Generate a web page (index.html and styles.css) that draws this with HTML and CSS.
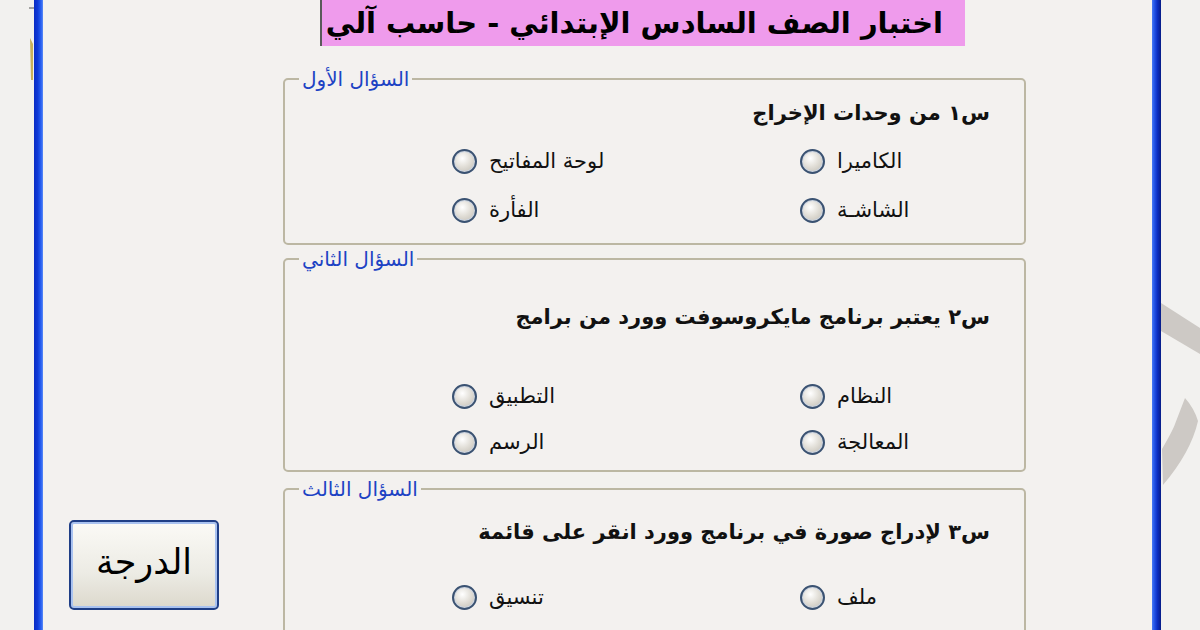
FILE: index.html
```html
<!DOCTYPE html>
<html lang="ar">
<head>
    <meta charset="UTF-8">
    <title>اختبار الصف السادس الإبتدائي</title>
    <link rel="stylesheet" href="styles.css">
</head>
<body>
    <div class="outside-left">
        <svg width="34" height="630" viewBox="0 0 34 630">
            <line x1="29" y1="8" x2="34" y2="8" stroke="#555" stroke-width="1"/>
            <path d="M30 38 L33 44 L33 80 L31 80 Z" fill="#c9b15a"/>
        </svg>
    </div>

    <div class="window">
        <div class="edge-left"></div>
        <div class="content">
            <div class="side">
                <button class="grade-button">الدرجة</button>
            </div>

            <div class="main">
                <div class="title">اختبار الصف السادس الإبتدائي - حاسب آلي</div>

                <fieldset class="group group-1">
                    <legend>السؤال الأول</legend>
                    <div class="question">س١ من وحدات الإخراج</div>
                    <div class="options">
                        <label class="option"><span class="radio"></span>لوحة المفاتيح</label>
                        <label class="option"><span class="radio"></span>الكاميرا</label>
                        <label class="option"><span class="radio"></span>الفأرة</label>
                        <label class="option"><span class="radio"></span>الشاشـة</label>
                    </div>
                </fieldset>

                <fieldset class="group group-2">
                    <legend>السؤال الثاني</legend>
                    <div class="question">س٢ يعتبر برنامج مايكروسوفت وورد من برامج</div>
                    <div class="options">
                        <label class="option"><span class="radio"></span>التطبيق</label>
                        <label class="option"><span class="radio"></span>النظام</label>
                        <label class="option"><span class="radio"></span>الرسم</label>
                        <label class="option"><span class="radio"></span>المعالجة</label>
                    </div>
                </fieldset>

                <fieldset class="group group-3">
                    <legend>السؤال الثالث</legend>
                    <div class="question">س٣ لإدراج صورة في برنامج وورد انقر على قائمة</div>
                    <div class="options">
                        <label class="option"><span class="radio"></span>تنسيق</label>
                        <label class="option"><span class="radio"></span>ملف</label>
                    </div>
                </fieldset>
            </div>
        </div>
        <div class="edge-right"></div>
    </div>

    <div class="outside-right">
        <!-- faded logo behind the window -->
        <svg width="39" height="630" viewBox="0 0 39 630">
            <path d="M0 303 L39 328 L39 354 L0 331 Z" fill="#cdc9c5"/>
            <path d="M24 398 Q33 408 37 421 Q30 452 2 485 L1 449 Q12 430 14 424 Z" fill="#cdc9c5"/>
        </svg>
    </div>
</body>
</html>
```

FILE: styles.css
```css
body {
    margin: 0;
    width: 1200px;
    height: 630px;
    overflow: hidden;
    display: flex;
    background-color: #f2f1ef;
    font-family: "DejaVu Sans", sans-serif;
}
.outside-left {
    width: 34px;
    flex-shrink: 0;
}
.outside-right {
    width: 39px;
    flex-shrink: 0;
}
.outside-left svg,
.outside-right svg {
    display: block;
}
.window {
    width: 1127px;
    display: flex;
    flex-shrink: 0;
}
.edge-left {
    width: 9px;
    background: linear-gradient(to right, #0a2cc4, #0f3ad8 40%, #2a62f2 80%, #5d8cf6);
}
.edge-right {
    width: 9px;
    background: linear-gradient(to right, #4a7cf4, #2456e8 25%, #0b2ec2 60%, #071c86);
}
.content {
    flex: 1;
    display: flex;
    background-color: #f3f1ef;
}

/* left column with the grade button */
.side {
    width: 240px;
    flex-shrink: 0;
    box-sizing: border-box;
    display: flex;
    align-items: flex-end;
    padding: 0 0 20px 26px;
}
.grade-button {
    width: 150px;
    height: 90px;
    border: 2px solid #1f3e86;
    border-radius: 5px;
    background: linear-gradient(to bottom, #fbfaf6, #ecebe4 60%, #dcd8cc);
    box-shadow: inset 0 0 0 2px #a9c2f0;
    font-family: "DejaVu Sans", sans-serif;
    font-size: 35px;
    color: #000;
    padding: 0 0 6px;
    cursor: pointer;
}

/* main column */
.main {
    width: 743px;
    flex-shrink: 0;
    display: flex;
    flex-direction: column;
}
.title {
    margin-left: 37px;
    width: 645px;
    height: 46px;
    box-sizing: border-box;
    background-color: #ef9bec;
    border-left: 2px solid #5a5a5a;
    direction: rtl;
    white-space: nowrap;
    padding-right: 22px;
    font-size: 29px;
    font-weight: bold;
    line-height: 46px;
    color: #000;
}

/* question group boxes */
.group {
    margin: 0;
    padding: 0;
    border: 2px solid #bcb7a3;
    border-radius: 5px;
    min-width: 0;
}
.group legend {
    margin-left: 14px;
    padding: 0 3px;
    color: #1d43c4;
    font-size: 20px;
    line-height: 18px;
}
.question {
    direction: rtl;
    padding-right: 34px;
    font-size: 21px;
    font-weight: bold;
    line-height: 24px;
    color: #111;
}
.options {
    display: grid;
    grid-template-columns: 348px 348px;
    padding-left: 167px;
}
.option {
    display: flex;
    align-items: center;
    gap: 12px;
    height: 30px;
    font-size: 21px;
    color: #111;
}
.radio {
    width: 21px;
    height: 21px;
    border: 2px solid #3a5272;
    border-radius: 50%;
    background: radial-gradient(circle at 40% 35%, #ffffff, #e2dfd8 45%, #bdb9b0);
    box-shadow: inset 0 0 0 1px #c9d3e2;
    flex-shrink: 0;
}

.group-1 {
    margin-top: 24px;
    padding: 13px 0 18px;
}
.group-1 .options {
    margin-top: 21px;
    row-gap: 19px;
}
.group-2 {
    margin-top: 5px;
    padding: 37px 0 13px;
}
.group-2 .options {
    margin-top: 52px;
    row-gap: 16px;
}
.group-3 {
    margin-top: 8px;
    padding: 22px 0 60px;
}
.group-3 .options {
    margin-top: 38px;
    row-gap: 17px;
}
```
